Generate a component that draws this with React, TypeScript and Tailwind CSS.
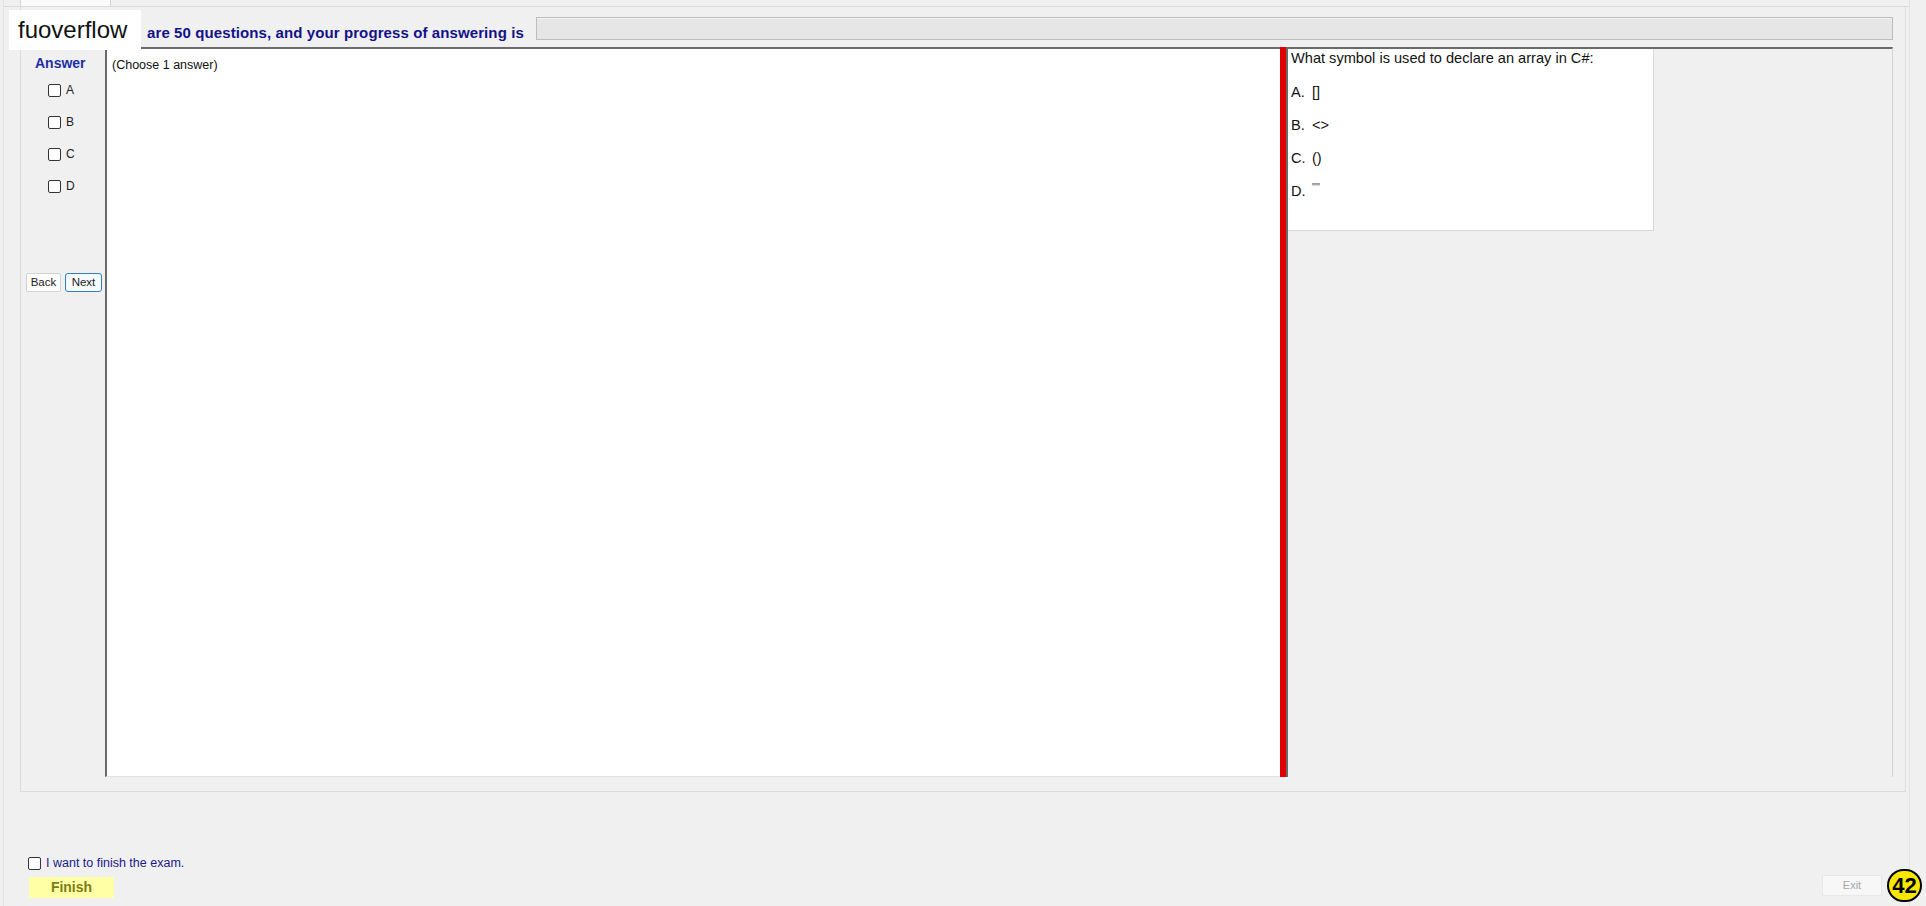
const options = [
  { key: "A", text: "[]" },
  { key: "B", text: "<>" },
  { key: "C", text: "()" },
  { key: "D", text: '""' },
];

export default function App() {
  return (
    <div className="relative h-[906px] w-full overflow-hidden bg-[#f0f0f0] font-['Liberation_Sans',Arial,sans-serif] text-[#1b1b1b]">
      <div className="ml-[3px] flex h-full w-[1907px] flex-col border-x border-[#e3e3e3]">
        {/* tab strip */}
        <div className="flex h-[7px] border-b border-[#dadada]">
          <div className="ml-[16px] h-full w-[91px] border-x border-[#d6d6d6] bg-[#fafafa]" />
        </div>

        {/* exam group */}
        <div className="ml-[16px] flex w-[1886px] flex-col border-x border-b border-[#dcdcdc] pb-[14px]">
          <div className="flex h-[40px] items-start">
            <div className="pl-[126px] pt-[17px] text-[15px] font-bold leading-[18px] tracking-[0.1px] text-[#12128a]">
              are 50 questions, and your progress of answering is
            </div>
            <div className="ml-[12px] mr-[12px] mt-[10px] h-[23px] flex-1 border border-[#bdbdbd] bg-[#e6e6e6] shadow-[inset_0_1px_0_#f4f4f4]" />
          </div>

          <div className="flex h-[730px]">
            <AnswerColumn />

            <div className="w-[1175px] border-b border-l-2 border-t-2 border-b-[#e4e4e4] border-l-[#6a6a6a] border-t-[#6a6a6a] bg-white pl-[5px] pt-[3px]">
              <span className="text-[12.5px] leading-[16px] text-[#111]">(Choose 1 answer)</span>
            </div>

            <div className="w-[6px] bg-[#e10000]" />

            <div className="w-[607px] border-l-2 border-r border-t-2 border-l-[#6a6a6a] border-r-[#d4d4d4] border-t-[#6a6a6a] bg-[#f0f0f0]">
              <QuestionBox />
            </div>
          </div>
        </div>

        {/* finish area */}
        <div className="flex flex-1 items-end justify-between pb-[8px] pl-[24px] pr-[27px]">
          <div className="flex flex-col gap-[7px]">
            <label className="flex items-center gap-[5px]">
              <Box />
              <span className="text-[12.5px] leading-[14px] text-[#1a1a8a]">I want to finish the exam.</span>
            </label>
            <button className="ml-[1px] h-[21px] w-[85px] bg-[#ffffa6] text-[14px] font-bold text-[#7c7c14]">
              Finish
            </button>
          </div>
          <button className="mb-[2px] h-[21px] w-[60px] border border-[#e8e8e8] bg-[#f7f7f7] text-[11px] text-[#a8a8a8]">
            Exit
          </button>
        </div>
      </div>

      {/* logo overlay */}
      <div className="absolute left-[9px] top-[10px] flex h-[40px] w-[132px] items-center bg-white pl-[9px]">
        <span className="text-[24px] leading-none text-[#111]">fuoverflow</span>
      </div>

      <div className="absolute bottom-[4px] right-[4px] flex h-[33px] w-[35px] items-center justify-center rounded-full border-2 border-black bg-[#f7e600] text-[22px] font-bold leading-none text-black">
        42
      </div>
    </div>
  );
}

function Box() {
  return <span className="inline-block h-[13px] w-[13px] rounded-[2px] border border-[#333] bg-white" />;
}

function AnswerColumn() {
  return (
    <div className="flex w-[84px] flex-col">
      <div className="pl-[14px] pt-[8px] text-[14px] font-bold leading-[16px] text-[#1d2fa4]">Answer</div>
      <div className="mt-[3px] flex flex-col">
        {options.map((o) => (
          <label key={o.key} className="flex h-[32px] items-center gap-[5px] pl-[27px]">
            <Box />
            <span className="text-[12px] text-[#222]">{o.key}</span>
          </label>
        ))}
      </div>
      <div className="mt-[71px] flex gap-[4px] pl-[5px]">
        <button className="h-[19px] w-[35px] rounded-[2px] border border-[#d2d2d2] bg-[#fdfdfd] text-[11.5px] text-[#222]">
          Back
        </button>
        <button className="h-[19px] w-[37px] rounded-[3px] border border-[#2f7fc1] bg-[#f6faff] text-[11.5px] text-[#222]">
          Next
        </button>
      </div>
    </div>
  );
}

function QuestionBox() {
  return (
    <div className="h-[182px] w-[366px] border-b border-r border-[#d8d8d8] bg-white pl-[3px] pt-[1px] text-[14.6px] leading-[17px] text-[#111]">
      <div>What symbol is used to declare an array in C#:</div>
      <div className="mt-[9px]">
        {options.map((o) => (
          <div key={o.key} className="flex h-[33px] items-center">
            <span className="w-[21px]">{o.key}.</span>
            {o.key === "D" ? (
              <span className="-mt-[8px] text-[11px] text-[#444]">{o.text}</span>
            ) : (
              <span>{o.text}</span>
            )}
          </div>
        ))}
      </div>
    </div>
  );
}
